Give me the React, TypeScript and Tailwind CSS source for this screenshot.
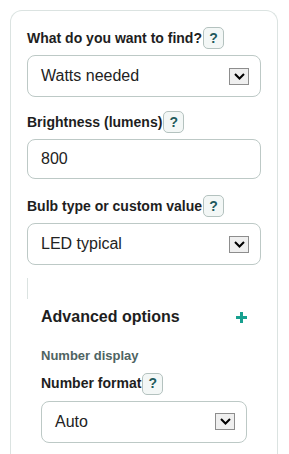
import React from "react";

function Help() {
  return (
    <span className="ml-px inline-flex h-[22px] w-[21px] items-center justify-center rounded-[5px] border border-[#b4c2bf] bg-[#f3f7f6] text-[14px] font-bold text-[#1f5a5c]">
      ?
    </span>
  );
}

function Label({ text, help = true }: { text: string; help?: boolean }) {
  return (
    <div className="flex h-[22px] items-center text-[14px] font-bold text-[#1e1e1e]">
      <span>{text}</span>
      {help && <Help />}
    </div>
  );
}

function Arrow() {
  return (
    <span className="flex h-[17px] w-[20px] items-center justify-center border border-[#8d8d8d] bg-[#efefef]">
      <svg width="11" height="7" viewBox="0 0 11 7">
        <path d="M1 1 L5.5 5.5 L10 1" fill="none" stroke="#000" strokeWidth="2" />
      </svg>
    </span>
  );
}

function Select({ value }: { value: string }) {
  return (
    <div className="flex h-[42px] items-center justify-between rounded-lg border border-[#bdc9c6] bg-white pl-[13px] pr-[11px] text-[16px] text-[#222]">
      <span>{value}</span>
      <Arrow />
    </div>
  );
}

export default function App() {
  return (
    <div className="min-h-[454px] bg-white pl-[10px] pt-[10px] font-['Liberation_Sans',Arial,sans-serif]">
      <div className="h-[460px] w-[268px] rounded-t-xl border border-b-0 border-[#dbe3e1] px-4 pt-[16px]">
        <Label text="What do you want to find?" />
        <div className="mt-[6px]">
          <Select value="Watts needed" />
        </div>

        <div className="mt-[14px]">
          <Label text="Brightness (lumens)" />
        </div>
        <div className="mt-[6px] flex h-[40px] items-center rounded-lg border border-[#bdc9c6] pl-[13px] text-[16px] text-[#222]">
          800
        </div>

        <div className="mt-[16px]">
          <Label text="Bulb type or custom value" />
        </div>
        <div className="mt-[6px]">
          <Select value="LED typical" />
        </div>

        <div className="mt-[13px] h-[21px] border-l border-[#dbe3e1]" />

        <div className="px-[14px]">
          <div className="mt-[6px] flex items-center justify-between">
            <span className="text-[16px] font-bold text-[#1e1e1e]">Advanced options</span>
            <svg width="11" height="11" viewBox="0 0 11 11">
              <path d="M0 5.5 H11 M5.5 0 V11" stroke="#17a08f" strokeWidth="3" />
            </svg>
          </div>
          <div className="mt-[17px] text-[13px] font-bold text-[#4f6462]">Number display</div>
          <div className="mt-[7px]">
            <Label text="Number format" />
          </div>
          <div className="mt-[6px]">
            <Select value="Auto" />
          </div>
        </div>
      </div>
    </div>
  );
}
